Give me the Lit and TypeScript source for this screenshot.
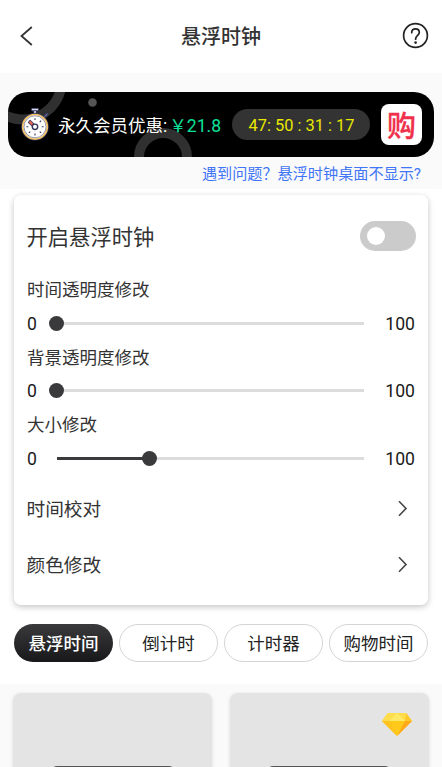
import { LitElement, html, css, svg } from "lit";
import { customElement, property } from "lit/decorators.js";
import { classMap } from "lit/directives/class-map.js";

@customElement("value-slider")
class ValueSlider extends LitElement {
  @property() label = "";
  @property({ type: Number }) value = 0;

  static styles = css`
    :host { display: block; height: 67.7px; }
    .label { height: 35px; line-height: 37px; font-size: 17.5px; color: #333; }
    .row { display: flex; align-items: center; height: 32px; font-family: Roboto, sans-serif; font-size: 17.6px; color: #1a1a1a; }
    .min { width: 30px; }
    .max { width: 51px; text-align: right; }
    .min, .max { padding-top: 1.5px; }
    .track { position: relative; width: 308.5px; height: 3px; background: #dcdcdc; }
    .fill { height: 3px; background: #3a3a3c; }
    .thumb { position: absolute; top: -6px; width: 15px; height: 15px; margin-left: -7.5px; border-radius: 50%; background: #3a3a3c; }
  `;

  render() {
    return html`
      <div class="label">${this.label}</div>
      <div class="row">
        <span class="min">0</span>
        <div class="track">
          <div class="fill" style="width:${this.value}%"></div>
          <div class="thumb" style="left:${this.value}%"></div>
        </div>
        <span class="max">100</span>
      </div>
    `;
  }
}

@customElement("app-root")
class AppRoot extends LitElement {
  @property() active = "悬浮时间";

  static styles = css`
    :host { display: block; height: 767px; overflow: hidden; background: #fff; font-family: Roboto, "Noto Sans CJK SC", sans-serif; }
    * { box-sizing: border-box; }
    svg { display: block; flex: none; }
    .header { height: 73px; display: flex; align-items: center; justify-content: space-between; padding: 0 13px 2px 19px; }
    .side { width: 21px; }
    .title { font-size: 20px; font-weight: 500; color: #333; line-height: 30px; padding-top: 2px; }
    .promo { height: 116px; padding: 19px 8px 0; background: #fafafa; }
    .banner { position: relative; height: 65px; border-radius: 20px; background: #000; overflow: hidden; display: flex; align-items: center; padding: 0 12px 0 13px; }
    .decor { position: absolute; left: 0; top: 0; }
    .watch { position: relative; }
    .offer { position: relative; margin-left: 8px; width: 166px; font-size: 17.5px; color: #fff; white-space: nowrap; line-height: 26px; padding-top: 2px; }
    .price { color: #0ce09a; font-size: 17.6px; margin-left: 2px; }
    .timer { margin-left: 8px; width: 138px; height: 31px; border-radius: 16px; background: #333; color: #e8e800; font-size: 16.4px; line-height: 33px; text-align: center; white-space: pre; padding-left: 1px; }
    .buy { margin-left: 11px; width: 41px; height: 41px; border-radius: 8px; background: #fff; color: #f0304a; font-size: 29px; font-weight: 500; line-height: 46px; text-align: center; -webkit-text-stroke: .3px #f0304a; }
    .faq { text-align: right; padding-right: 13px; font-size: 15.15px; line-height: 22px; margin-top: 6px; color: #3f75f6; }
    .panel { margin: 6px 14px 0; height: 410px; padding: 14px 13px 0; border-radius: 7px; background: #fff; box-shadow: 0 2px 6px rgba(0,0,0,.23); }
    .row { display: flex; justify-content: space-between; align-items: center; height: 56.5px; font-size: 18.7px; color: #333; }
    .row span { padding-bottom: 2px; margin-left: -.5px; }
    .row.enable { height: 54px; margin-bottom: 9px; font-size: 21.3px; }
    .switch { width: 55.5px; height: 30px; border-radius: 15px; background: #cbcbcb; padding: 6px 7px; margin-right: -.5px; }
    .knob { width: 18px; height: 18px; border-radius: 50%; background: #fff; }
    .links { padding-top: 5px; }
    .chev { margin-right: 7px; }
    .tabs { display: flex; justify-content: space-between; padding: 19px 14px 22px; height: 79px; }
    .tab { width: 99px; height: 38px; border-radius: 19px; border: 1.5px solid #d5d5d5; text-align: center; line-height: 38px; font-size: 17.5px; color: #222; }
    .tab.on { border: 0; line-height: 40px; background: linear-gradient(#3a3a3c, #18181a); color: #fff; font-weight: 500; }
    .cards { background: #fafafa; height: 83px; padding: 9px 13.5px 0 13px; display: flex; justify-content: space-between; }
    .card { position: relative; width: 199px; height: 160px; border-radius: 8px; background: #e4e4e4; box-shadow: 0 1px 4px rgba(0,0,0,.12); padding-top: 73px; }
    .clock { width: 124px; height: 60px; margin: 0 auto; border-radius: 6px; background: #555; }
    .gem { position: absolute; right: 17px; top: 20px; }
  `;

  chevron() {
    return html`<svg class="chev" width="10" height="17" viewBox="0 0 10 17" fill="none" stroke="#444" stroke-width="1.6"><path d="M1 1.3 8 8.5 1 15.7" /></svg>`;
  }

  watch() {
    const ticks = [0, 45, 90, 135, 180, 225, 270, 315].map(
      (a) => svg`<path d="M14 10.2v1.9" stroke="#34375c" stroke-width="1.1" transform="rotate(${a} 14 18.8)" />`
    );
    return html`<svg class="watch" width="29" height="34" viewBox="0 0 29 34" fill="none">
      <path d="M10.5 1.8h7M14 2v5" stroke="#34375c" stroke-width="3.4" />
      <path d="M10.7 1.5h6.6M13 4h2" stroke="#d5d9ef" stroke-width="1.5" />
      <path d="m23 9 4-3.5" stroke="#34375c" stroke-width="3" />
      <path d="m23.5 8.5 3-2.5" stroke="#b5bad8" stroke-width="1" stroke-dasharray="1.3 1" />
      <circle cx="14" cy="18.8" r="13.8" fill="#34375c" />
      <circle cx="14" cy="18.8" r="12.3" fill="#fff" stroke="#f0bf62" stroke-width="1.7" />
      <circle cx="14" cy="18.8" r="11" stroke="#6a6d92" stroke-width=".7" />
      ${ticks}
      <path d="m8 13.2 4.2 4" stroke="#34375c" stroke-width="3.7" />
      <path d="m8.5 13.5 3.5 3.5" stroke="#ef6558" stroke-width="2.3" />
      <circle cx="14" cy="18.8" r="2.7" fill="#fff" stroke="#34375c" stroke-width="1.4" />
    </svg>`;
  }

  gem() {
    return html`<svg class="gem" width="30" height="23" viewBox="0 0 30 23">
      <path d="M6 0h18l6 8-15 15L0 8z" fill="#ffc91b" />
      <path d="M6 0h18l6 8H0z" fill="#ffdc4c" />
      <path d="m15 0 8 8H7z" fill="#ffe964" />
      <path d="m23 8 7 0-15 15z" fill="#ffa91a" />
      <path d="M0 8h7l8 15z" fill="#ffc21e" />
      <path d="m24 0 6 8h-7z" fill="#ffc92c" />
    </svg>`;
  }

  render() {
    return html`
      <div class="header">
        <div class="side"><svg width="14" height="20" viewBox="0 0 14 20" fill="none" stroke="#333" stroke-width="1.8"><path d="M12.8 1 2.5 10l10.3 9" /></svg></div>
        <div class="title">悬浮时钟</div>
        <svg width="27" height="27" viewBox="0 0 27 27" fill="none" stroke="#222" stroke-width="1.7">
          <circle cx="13.5" cy="13.5" r="11.9" />
          <path d="M9.7 10.7c0-2.4 1.6-3.9 3.8-3.9s3.8 1.5 3.8 3.6c0 3-3.7 3-3.7 6.8" stroke-linecap="round" />
          <circle cx="13.6" cy="20.6" r="1.3" fill="#222" stroke="none" />
        </svg>
      </div>
      <div class="promo">
        <div class="banner">
          <svg class="decor" width="426" height="65" viewBox="0 0 426 65" fill="none" stroke="#303030" stroke-width="10">
            <circle cx="15" cy="-11" r="38.5" />
            <circle cx="155" cy="65" r="24" />
            <circle cx="84.5" cy="10.5" r="4.3" fill="#555" stroke="none" />
          </svg>
          ${this.watch()}
          <div class="offer">永久会员优惠:<span class="price">￥21.8</span></div>
          <div class="timer">47: 50 : 31 : 17</div>
          <div class="buy">购</div>
        </div>
        <div class="faq">遇到问题？悬浮时钟桌面不显示?</div>
      </div>
      <div class="panel">
        <div class="row enable"><span>开启悬浮时钟</span><div class="switch"><div class="knob"></div></div></div>
        <value-slider label="时间透明度修改" .value=${0}></value-slider>
        <value-slider label="背景透明度修改" .value=${0}></value-slider>
        <value-slider label="大小修改" .value=${30}></value-slider>
        <div class="links">
          <div class="row"><span>时间校对</span>${this.chevron()}</div>
          <div class="row"><span>颜色修改</span>${this.chevron()}</div>
        </div>
      </div>
      <div class="tabs">
        ${["悬浮时间", "倒计时", "计时器", "购物时间"].map(
          (t) => html`<div class=${classMap({ tab: true, on: t === this.active })}>${t}</div>`
        )}
      </div>
      <div class="cards">
        <div class="card"><div class="clock"></div></div>
        <div class="card"><div class="clock"></div>${this.gem()}</div>
      </div>
    `;
  }
}
